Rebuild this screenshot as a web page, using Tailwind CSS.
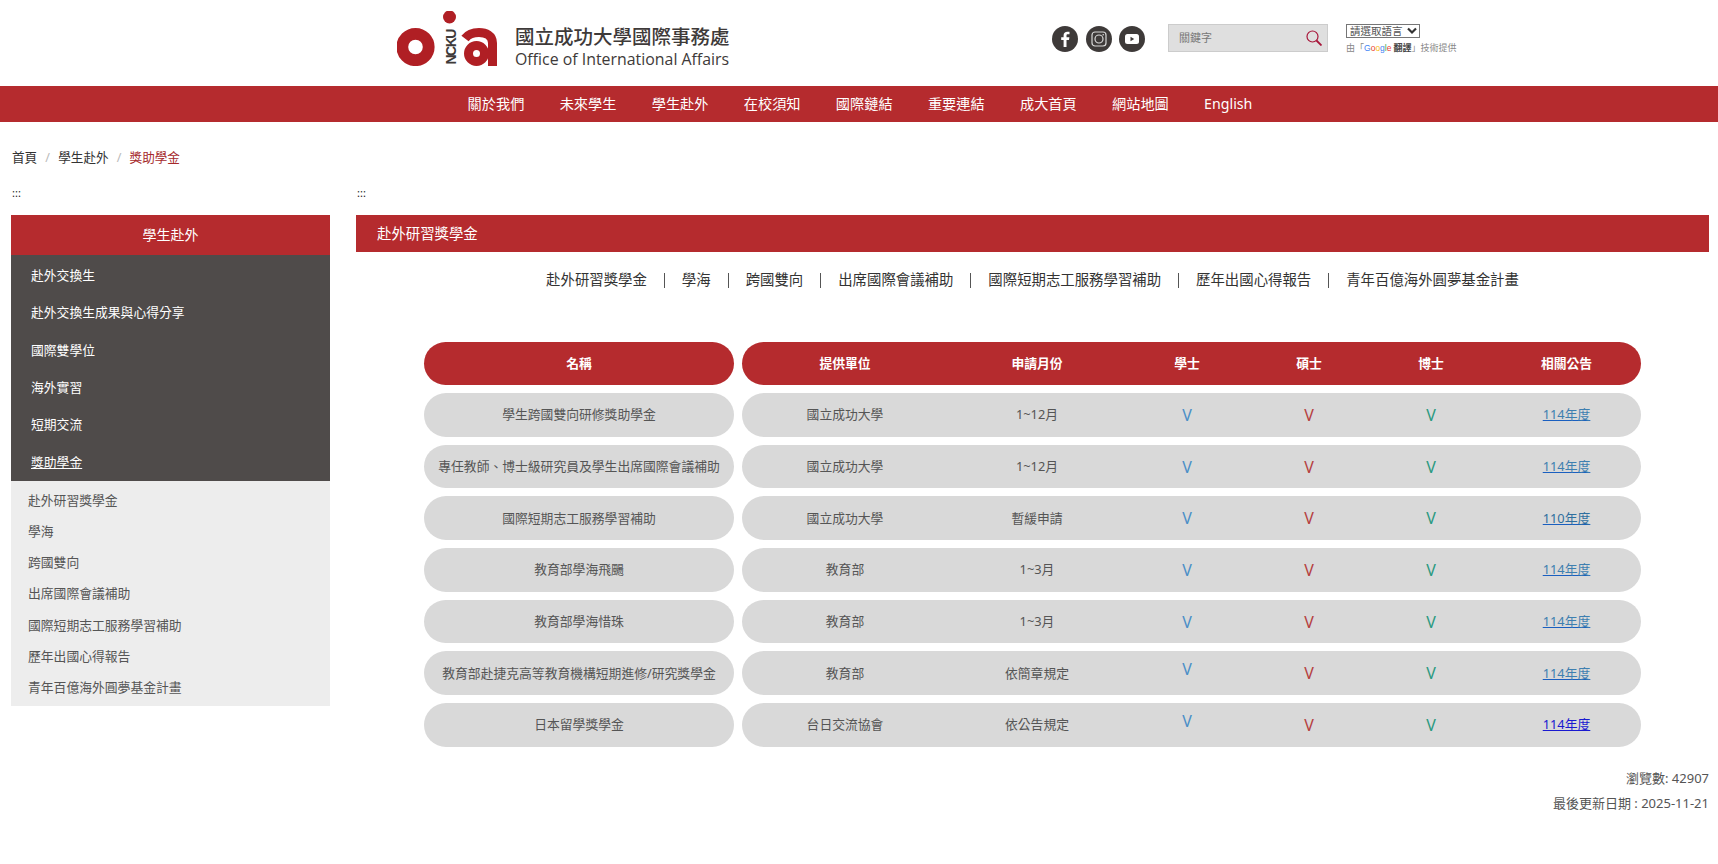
<!DOCTYPE html>
<html lang="zh-Hant">
<head>
    <meta charset="UTF-8">
    <title>獎助學金 - 國立成功大學國際事務處</title>
    <script src="https://cdn.jsdelivr.net/npm/@tailwindcss/browser@4"></script>
</head>
<body class="bg-white overflow-hidden font-['Noto_Sans','Noto_Sans_CJK_TC',sans-serif] text-[12.8px] text-[#555]">
    <!-- header -->
    <header class="flex h-[86px] pl-[397px]">
        <svg class="mt-[11px] w-[100px] h-[55px] shrink-0" viewBox="0 0 100 55">
            <circle cx="18.500" cy="36" r="13.200" fill="none" stroke="#b01f24" stroke-width="11.800"/>
            <circle cx="52.500" cy="6" r="6.500" fill="#b01f24"/>
            <text transform="translate(58.500 53.500) rotate(-90)" font-family="Liberation Sans" font-weight="700" font-size="14" fill="#3e3a39" textLength="36">NCKU</text>
            <circle cx="79.500" cy="42.500" r="8" fill="none" stroke="#b01f24" stroke-width="9"/>
            <path d="M95.500 55V32C95.500 24.500 89 21.500 82 21.500C76 21.500 71 23.500 68 27.500" fill="none" stroke="#b01f24" stroke-width="9"/>
        </svg>
        <div class="ml-[18px] mt-[23px] w-[216px] text-[#3e3a39]">
            <div class="text-[19.500px] leading-[25px] font-medium whitespace-nowrap font-['Noto_Sans_CJK_TC',sans-serif]">國立成功大學國際事務處</div>
            <div class="text-[15.900px] leading-[21px] mt-[1px] whitespace-nowrap font-['Open_Sans',sans-serif]">Office of International Affairs</div>
        </div>
        <div class="ml-[321px] mt-[26px] flex gap-[7.500px] h-[26px]">
            <svg class="w-[26px] h-[26px]" viewBox="0 0 26 26"><circle cx="13" cy="13" r="13" fill="#3e3a39"/><path d="M14.500 21V14H17L17.400 11.200H14.500V9.600C14.500 8.800 14.800 8.300 15.900 8.300H17.500V5.800C17.200 5.800 16.300 5.700 15.300 5.700C13.100 5.700 11.600 7 11.600 9.300V11.200H9.200V14H11.600V21Z" fill="#fff"/></svg>
            <svg class="w-[26px] h-[26px]" viewBox="0 0 26 26"><circle cx="13" cy="13" r="13" fill="#3e3a39"/><rect x="6" y="6" width="14" height="14" rx="3" fill="none" stroke="#d8d8d8" stroke-width="1.200"/><circle cx="13" cy="13" r="4" fill="none" stroke="#d8d8d8" stroke-width="1.200"/><circle cx="17.200" cy="8.800" r="0.800" fill="#d8d8d8"/></svg>
            <svg class="w-[26px] h-[26px]" viewBox="0 0 26 26"><circle cx="13" cy="13" r="13" fill="#3e3a39"/><rect x="6" y="8" width="14" height="10" rx="2.500" fill="#fff"/><path d="M11.500 10.800V15.200L15.200 13Z" fill="#3e3a39"/></svg>
        </div>
        <div class="ml-[23px] mt-[24px] flex items-center justify-between w-[160px] h-[28px] bg-[#dfdfdf] border border-[#cccccc] pl-[10px] pr-[5px]">
            <span class="pb-[2px] text-[11px] text-[#777] font-['Noto_Sans_CJK_TC',sans-serif]">關鍵字</span>
            <svg class="w-[16px] h-[16px]" viewBox="0 0 16 16" fill="none" stroke="#a8163a"><circle cx="6.500" cy="6.500" r="5.500" stroke-width="1.200"/><path d="M10.500 10.500L15.500 15.500" stroke-width="1.800"/></svg>
        </div>
        <div class="ml-[18px] mt-[24px]">
            <div class="flex items-center justify-between w-[74px] h-[14px] border border-[#767676] pl-[3px] pr-[2px] text-[10.500px] leading-none text-[#555] font-['Noto_Sans_CJK_TC',sans-serif]">
                <span>請選取語言</span>
                <svg class="w-[10px] h-[8px]" viewBox="0 0 10 8" fill="none" stroke="#333" stroke-width="2.200"><path d="M1 1.500L5 5.500L9 1.500"/></svg>
            </div>
            <div class="mt-[3px] text-[9px] leading-[14px] text-[#888] whitespace-nowrap font-['Noto_Sans_CJK_TC',sans-serif]">由「<span class="font-['Liberation_Sans'] text-[8.500px]"><span class="text-[#4285f4]">G</span><span class="text-[#ea4335]">o</span><span class="text-[#fbbc05]">o</span><span class="text-[#4285f4]">g</span><span class="text-[#34a853]">l</span><span class="text-[#ea4335]">e</span></span> <b class="text-[#444]">翻譯</b>」技術提供</div>
        </div>
    </header>

    <!-- nav -->
    <nav class="flex justify-center gap-[35.300px] pl-[2px] h-[36px] items-center bg-[#b52b2e] text-white text-[14.200px]">
        <a href="#">關於我們</a>
        <a href="#">未來學生</a>
        <a href="#">學生赴外</a>
        <a href="#">在校須知</a>
        <a href="#">國際鏈結</a>
        <a href="#">重要連結</a>
        <a href="#">成大首頁</a>
        <a href="#">網站地圖</a>
        <a href="#">English</a>
    </nav>

    <!-- breadcrumb -->
    <div class="flex items-center h-[20px] mt-[26px] pl-[12px] text-[12.600px] text-[#333]">
        <a href="#">首頁</a>
        <span class="w-[21px] text-center text-[#bbb]">/</span>
        <a href="#">學生赴外</a>
        <span class="w-[21px] text-center text-[#bbb]">/</span>
        <span class="text-[#a5282b]">獎助學金</span>
    </div>

    <div class="flex mt-[16px] pl-[11px]">
        <!-- sidebar -->
        <aside class="w-[319px]">
            <div class="h-[31px] pl-[1px] text-[11px] leading-[18px] text-[#222]">:::</div>
            <div class="h-[40px] pb-[2px] flex items-center justify-center bg-[#b52b2e] text-white text-[14px]">學生赴外</div>
            <ul class="bg-[#4f4b4a] text-white h-[226px] pt-[2px] grid grid-rows-6 pl-[20px] items-center">
                <li><a href="#">赴外交換生</a></li>
                <li><a href="#">赴外交換生成果與心得分享</a></li>
                <li><a href="#">國際雙學位</a></li>
                <li><a href="#">海外實習</a></li>
                <li><a href="#">短期交流</a></li>
                <li><a href="#" class="underline">獎助學金</a></li>
            </ul>
            <ul class="bg-[#ededed] h-[225px] pt-[4px] pb-[3px] pl-[17px] grid grid-rows-7 items-center text-[#555]">
                <li><a href="#">赴外研習獎學金</a></li>
                <li><a href="#">學海</a></li>
                <li><a href="#">跨國雙向</a></li>
                <li><a href="#">出席國際會議補助</a></li>
                <li><a href="#">國際短期志工服務學習補助</a></li>
                <li><a href="#">歷年出國心得報告</a></li>
                <li><a href="#">青年百億海外圓夢基金計畫</a></li>
            </ul>
        </aside>

        <!-- main -->
        <main class="ml-[26px] w-[1353px]">
            <div class="h-[31px] pl-[1px] text-[11px] leading-[18px] text-[#222]">:::</div>
            <h2 class="h-[37px] flex items-center pl-[21px] bg-[#b52b2e] text-white text-[14.400px]">赴外研習獎學金</h2>

            <div class="flex justify-center items-center h-[20px] mt-[18px] text-[14.400px] text-[#333]">
                <a href="#">赴外研習獎學金</a>
                <span class="mx-[17px] w-px h-[15px] bg-[#555]"></span>
                <a href="#">學海</a>
                <span class="mx-[17px] w-px h-[15px] bg-[#555]"></span>
                <a href="#">跨國雙向</a>
                <span class="mx-[17px] w-px h-[15px] bg-[#555]"></span>
                <a href="#">出席國際會議補助</a>
                <span class="mx-[17px] w-px h-[15px] bg-[#555]"></span>
                <a href="#">國際短期志工服務學習補助</a>
                <span class="mx-[17px] w-px h-[15px] bg-[#555]"></span>
                <a href="#">歷年出國心得報告</a>
                <span class="mx-[17px] w-px h-[15px] bg-[#555]"></span>
                <a href="#">青年百億海外圓夢基金計畫</a>
            </div>

            <div class="ml-[68px] w-[1217px] mt-[52px] flex flex-col gap-[8px] text-center">
                <div class="flex gap-[8px] h-[43px] font-bold text-white">
                    <div class="w-[310px] rounded-full bg-[#b52b2e] flex items-center justify-center">名稱</div>
                    <div class="w-[899px] rounded-full bg-[#b52b2e] grid grid-cols-[206px_178px_122px_122px_122px_149px] items-center">
                        <div>提供單位</div><div>申請月份</div><div>學士</div><div>碩士</div><div>博士</div><div>相關公告</div>
                    </div>
                </div>
                <div class="flex gap-[8px] h-[43.700px]">
                    <div class="w-[310px] rounded-full bg-[#d9d9d9] flex items-center justify-center">學生跨國雙向研修獎助學金</div>
                    <div class="w-[899px] rounded-full bg-[#d9d9d9] grid grid-cols-[206px_178px_122px_122px_122px_149px] items-center">
                        <div>國立成功大學</div><div>1~12月</div>
                        <div class="text-[16px] text-[#4a8fc7]">V</div><div class="text-[16px] text-[#b5403f]">V</div><div class="text-[16px] text-[#2a9a80]">V</div>
                        <div><a href="#" class="text-[#3e7fb0] underline decoration-[#1a5fc0]">114年度</a></div>
                    </div>
                </div>
                <div class="flex gap-[8px] h-[43.700px]">
                    <div class="w-[310px] rounded-full bg-[#d9d9d9] flex items-center justify-center">專任教師、博士級研究員及學生出席國際會議補助</div>
                    <div class="w-[899px] rounded-full bg-[#d9d9d9] grid grid-cols-[206px_178px_122px_122px_122px_149px] items-center">
                        <div>國立成功大學</div><div>1~12月</div>
                        <div class="text-[16px] text-[#4a8fc7]">V</div><div class="text-[16px] text-[#b5403f]">V</div><div class="text-[16px] text-[#2a9a80]">V</div>
                        <div><a href="#" class="text-[#3e7fb0] underline decoration-[#1a5fc0]">114年度</a></div>
                    </div>
                </div>
                <div class="flex gap-[8px] h-[43.700px]">
                    <div class="w-[310px] rounded-full bg-[#d9d9d9] flex items-center justify-center">國際短期志工服務學習補助</div>
                    <div class="w-[899px] rounded-full bg-[#d9d9d9] grid grid-cols-[206px_178px_122px_122px_122px_149px] items-center">
                        <div>國立成功大學</div><div>暫緩申請</div>
                        <div class="text-[16px] text-[#4a8fc7]">V</div><div class="text-[16px] text-[#b5403f]">V</div><div class="text-[16px] text-[#2a9a80]">V</div>
                        <div><a href="#" class="text-[#2f6f9f] underline decoration-[#1a5fc0]">110年度</a></div>
                    </div>
                </div>
                <div class="flex gap-[8px] h-[43.700px]">
                    <div class="w-[310px] rounded-full bg-[#d9d9d9] flex items-center justify-center">教育部學海飛颺</div>
                    <div class="w-[899px] rounded-full bg-[#d9d9d9] grid grid-cols-[206px_178px_122px_122px_122px_149px] items-center">
                        <div>教育部</div><div>1~3月</div>
                        <div class="text-[16px] text-[#4a8fc7]">V</div><div class="text-[16px] text-[#b5403f]">V</div><div class="text-[16px] text-[#2a9a80]">V</div>
                        <div><a href="#" class="text-[#3e7fb0] underline decoration-[#1a5fc0]">114年度</a></div>
                    </div>
                </div>
                <div class="flex gap-[8px] h-[43.700px]">
                    <div class="w-[310px] rounded-full bg-[#d9d9d9] flex items-center justify-center">教育部學海惜珠</div>
                    <div class="w-[899px] rounded-full bg-[#d9d9d9] grid grid-cols-[206px_178px_122px_122px_122px_149px] items-center">
                        <div>教育部</div><div>1~3月</div>
                        <div class="text-[16px] text-[#4a8fc7]">V</div><div class="text-[16px] text-[#b5403f]">V</div><div class="text-[16px] text-[#2a9a80]">V</div>
                        <div><a href="#" class="text-[#3e7fb0] underline decoration-[#1a5fc0]">114年度</a></div>
                    </div>
                </div>
                <div class="flex gap-[8px] h-[43.700px]">
                    <div class="w-[310px] rounded-full bg-[#d9d9d9] flex items-center justify-center">教育部赴捷克高等教育機構短期進修/研究獎學金</div>
                    <div class="w-[899px] rounded-full bg-[#d9d9d9] grid grid-cols-[206px_178px_122px_122px_122px_149px] items-center">
                        <div>教育部</div><div>依簡章規定</div>
                        <div class="text-[16px] text-[#4a8fc7] mb-[8px]">V</div><div class="text-[16px] text-[#b5403f]">V</div><div class="text-[16px] text-[#2a9a80]">V</div>
                        <div><a href="#" class="text-[#3e7fb0] underline decoration-[#1a5fc0]">114年度</a></div>
                    </div>
                </div>
                <div class="flex gap-[8px] h-[43.700px]">
                    <div class="w-[310px] rounded-full bg-[#d9d9d9] flex items-center justify-center">日本留學獎學金</div>
                    <div class="w-[899px] rounded-full bg-[#d9d9d9] grid grid-cols-[206px_178px_122px_122px_122px_149px] items-center">
                        <div>台日交流協會</div><div>依公告規定</div>
                        <div class="text-[16px] text-[#4a8fc7] mb-[8px]">V</div><div class="text-[16px] text-[#b5403f]">V</div><div class="text-[16px] text-[#2a9a80]">V</div>
                        <div><a href="#" class="text-[#1a1ad0] underline">114年度</a></div>
                    </div>
                </div>
            </div>

            <div class="mt-[19px] text-right text-[13px] leading-[25px] text-[#555]">
                <div>瀏覽數: 42907</div>
                <div>最後更新日期 : 2025-11-21</div>
            </div>
        </main>
    </div>
</body>
</html>
